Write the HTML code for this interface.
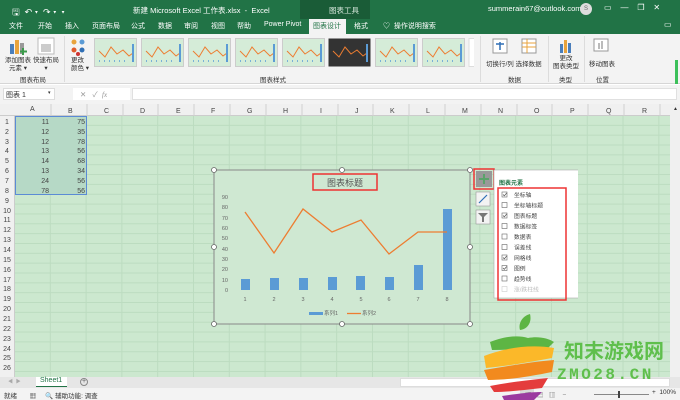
<!DOCTYPE html>
<html><head><meta charset="utf-8"><style>
*{margin:0;padding:0;box-sizing:border-box}
body{width:680px;height:400px;overflow:hidden;position:relative;font-family:"Liberation Sans","Noto Sans CJK SC",sans-serif;font-size:7px;color:#333;background:#fff}
.a{position:absolute}
.t{white-space:nowrap}
</style></head><body>
<!-- title bar -->
<div class="a" style="left:0;top:0;width:680px;height:34px;background:#217346"></div>
<div class="a" style="left:300px;top:0;width:70px;height:19px;background:#1a5c37"></div>
<div class="a t" style="left:12px;top:5px;color:#fff;font-size:9px">🖫 &nbsp;↶ ▾ &nbsp;↷ ▾ &nbsp;▾</div>
<div class="a t" style="left:133px;top:5px;color:#fff;font-size:7.5px">新建 Microsoft Excel 工作表.xlsx &nbsp;- &nbsp;Excel</div>
<div class="a t" style="left:329px;top:5px;color:#d8e8dd;font-size:7.5px">图表工具</div>
<div class="a t" style="left:488px;top:4px;color:#fff;font-size:7.5px">summerain67@outlook.com</div>
<div class="a" style="left:580px;top:3px;width:12px;height:12px;border-radius:6px;background:#ddd;color:#666;font-size:6px;text-align:center;line-height:12px">S</div>
<div class="a t" style="left:604px;top:3px;color:#fff;font-size:8px">▭ &nbsp;&nbsp; — &nbsp;&nbsp; ❐ &nbsp;&nbsp; ✕</div>
<!-- tabs -->
<div class="a t" style="left:9px;top:21px;color:#fff;font-size:7px;word-spacing:0">文件</div>
<div class="a t" style="left:38px;top:21px;color:#fff">开始</div>
<div class="a t" style="left:65px;top:21px;color:#fff">插入</div>
<div class="a t" style="left:92px;top:21px;color:#fff">页面布局</div>
<div class="a t" style="left:131px;top:21px;color:#fff">公式</div>
<div class="a t" style="left:158px;top:21px;color:#fff">数据</div>
<div class="a t" style="left:184px;top:21px;color:#fff">审阅</div>
<div class="a t" style="left:211px;top:21px;color:#fff">视图</div>
<div class="a t" style="left:237px;top:21px;color:#fff">帮助</div>
<div class="a t" style="left:264px;top:21px;color:#fff">Power Pivot</div>
<div class="a" style="left:309px;top:19px;width:37px;height:15px;background:#f3f3f3"></div>
<div class="a t" style="left:313px;top:21px;color:#217346">图表设计</div>
<div class="a t" style="left:354px;top:21px;color:#fff">格式</div>
<div class="a t" style="left:383px;top:21px;color:#fff">♡ &nbsp;操作说明搜索</div>
<div class="a t" style="left:664px;top:20px;color:#fff;font-size:8px">▭</div>
<!-- ribbon -->
<div class="a" style="left:0;top:34px;width:680px;height:50px;background:#f3f3f3;border-bottom:1px solid #d6d6d6"></div>
<svg class="a" style="left:8px;top:38px" width="20" height="18"><rect x="2" y="6" width="4" height="10" fill="#4a7ebb"/><rect x="7" y="2" width="4" height="14" fill="#e8a33c"/><rect x="12" y="5" width="4" height="11" fill="#999"/><path d="M15 10v7M12 13.5h7" stroke="#3a9a4a" stroke-width="2"/></svg>
<div class="a t" style="left:5px;top:57px;font-size:6.5px;line-height:8px;text-align:center">添加图表<br>元素 ▾</div>
<svg class="a" style="left:37px;top:37px" width="18" height="18"><rect x="1" y="1" width="16" height="16" fill="#fff" stroke="#bbb"/><rect x="4" y="7" width="10" height="8" fill="#ccc"/></svg>
<div class="a t" style="left:33px;top:57px;font-size:6.5px;line-height:8px;text-align:center">快速布局<br>▾</div>
<div class="a t" style="left:20px;top:74px;font-size:6.5px">图表布局</div>
<div class="a" style="left:64px;top:36px;width:1px;height:46px;background:#dcdcdc"></div>
<svg class="a" style="left:70px;top:38px" width="18" height="18"><circle cx="4" cy="4" r="2.5" fill="#e8a33c"/><circle cx="12" cy="4" r="2.5" fill="#5b9bd5"/><circle cx="4" cy="12" r="2.5" fill="#e05a2a"/><circle cx="12" cy="12" r="2.5" fill="#2f6fb5"/><circle cx="8" cy="16" r="2" fill="#c33"/></svg>
<div class="a t" style="left:71px;top:57px;font-size:6.5px;line-height:8px">更改<br>颜色 ▾</div>
<svg class="a" style="left:94px;top:38px" width="380" height="30">
<g id="th"><rect x="0.5" y="0.5" width="42" height="28" fill="#d5ecd8" stroke="#ccc"/><polyline points="5,13 11,19 17,9 23,16 29,12 35,18 39,15" fill="none" stroke="#ed7d31" stroke-width="1"/><rect x="38" y="6" width="2" height="18" fill="#5b9bd5"/><path d="M5 23h30" stroke="#5b9bd5" stroke-dasharray="1 4" stroke-width="1.5"/></g>
<use href="#th" x="47"/><use href="#th" x="94"/><use href="#th" x="141"/><use href="#th" x="188"/>
<rect x="234.5" y="0.5" width="42" height="28" fill="#333"/><polyline points="239,13 245,19 251,9 257,16 263,12 269,18 273,15" fill="none" stroke="#ed7d31"/><rect x="272" y="6" width="2" height="18" fill="#5b9bd5"/>
<use href="#th" x="281"/><use href="#th" x="328"/>
<rect x="375" y="0.5" width="6" height="28" fill="#fff" stroke="#ddd"/>
</svg>
<div class="a t" style="left:260px;top:74px;font-size:6.5px">图表样式</div>
<div class="a" style="left:480px;top:36px;width:1px;height:46px;background:#dcdcdc"></div>
<svg class="a" style="left:492px;top:38px" width="16" height="16"><rect x="1" y="1" width="14" height="14" fill="#fff" stroke="#999"/><path d="M4 6h8M8 4v8" stroke="#2f6fb5" stroke-width="1.5"/></svg>
<svg class="a" style="left:521px;top:38px" width="16" height="16"><rect x="1" y="1" width="14" height="14" fill="#fff" stroke="#999"/><path d="M1 5h14M1 9h14M6 1v14" stroke="#e8a33c"/></svg>
<div class="a t" style="left:486px;top:58px;font-size:6.5px">切换行/列 选择数据</div>
<div class="a t" style="left:508px;top:74px;font-size:6.5px">数据</div>
<div class="a" style="left:548px;top:36px;width:1px;height:46px;background:#dcdcdc"></div>
<svg class="a" style="left:558px;top:38px" width="16" height="16"><rect x="2" y="6" width="3" height="9" fill="#4a7ebb"/><rect x="6" y="2" width="3" height="13" fill="#e8a33c"/><rect x="10" y="5" width="3" height="10" fill="#4a7ebb"/></svg>
<div class="a t" style="left:553px;top:55px;font-size:6.5px;line-height:8px;text-align:center">更改<br>图表类型</div>
<div class="a t" style="left:559px;top:74px;font-size:6.5px">类型</div>
<div class="a" style="left:584px;top:36px;width:1px;height:46px;background:#dcdcdc"></div>
<svg class="a" style="left:593px;top:38px" width="16" height="16"><rect x="1" y="1" width="14" height="12" fill="#fff" stroke="#999"/><rect x="5" y="5" width="2" height="6" fill="#bbb"/><rect x="8" y="3" width="2" height="8" fill="#bbb"/></svg>
<div class="a t" style="left:589px;top:58px;font-size:6.5px">移动图表</div>
<div class="a t" style="left:596px;top:74px;font-size:6.5px">位置</div>
<div class="a" style="left:675px;top:60px;width:3px;height:24px;background:#3cc05a"></div>
<!-- formula bar -->
<div class="a" style="left:0;top:85px;width:680px;height:19px;background:#f3f3f3"></div>
<div class="a" style="left:3px;top:88px;width:52px;height:12px;background:#fff;border:1px solid #ddd"></div>
<div class="a t" style="left:6px;top:90px;font-size:7px">图表 1</div>
<div class="a t" style="left:48px;top:90px;font-size:5px">▾</div>
<div class="a" style="left:73px;top:88px;width:57px;height:12px;background:#fff"></div>
<div class="a t" style="left:80px;top:89px;color:#999;font-size:7.5px">✕ &nbsp; ✓ &nbsp;<i style="font-family:'Liberation Serif'">fx</i></div>
<div class="a" style="left:132px;top:88px;width:545px;height:12px;background:#fff;border:1px solid #e0e0e0"></div>
<!-- grid -->
<div class="a" style="left:0;top:104px;width:670px;height:12px;background:#f0f0f0;border-bottom:1px solid #ccc"></div>
<div class="a" style="left:0;top:116px;width:15px;height:261px;background:#f0f0f0;border-right:1px solid #ccc"></div>
<div class="a" style="left:15px;top:116px;width:655px;height:261px;background-color:#cce8cf;background-image:linear-gradient(to right,#bcdcc0 1px,transparent 1px),linear-gradient(to bottom,#bcdcc0 1px,transparent 1px);background-size:35.8px 100%,100% 9.85px;background-position:-1px 0,0 -1px"></div>
<div class="a" style="left:15px;top:116px;width:72px;height:79px;background:#b6d9c6;border:1px solid #5b8bd5"></div>
<div class="a" style="left:670px;top:104px;width:10px;height:273px;background:#f0f0f0"></div>
<div class="a t" style="left:673px;top:106px;font-size:5px">▲</div>
<div id="cols"></div>
<div class="a t" style="left:30px;top:106px;font-size:7px;color:#444;word-spacing:0">A</div>
<svg class="a" style="left:0;top:104px" width="670" height="12" font-size="7" fill="#444" font-family="Liberation Sans">
<text x="68" y="9">B</text><text x="104" y="9">C</text><text x="140" y="9">D</text><text x="176" y="9">E</text><text x="211" y="9">F</text><text x="247" y="9">G</text><text x="283" y="9">H</text><text x="320" y="9">I</text><text x="355" y="9">J</text><text x="390" y="9">K</text><text x="426" y="9">L</text><text x="462" y="9">M</text><text x="498" y="9">N</text><text x="534" y="9">O</text><text x="570" y="9">P</text><text x="606" y="9">Q</text><text x="642" y="9">R</text>
<path d="M51 0v12M87 0v12M123 0v12M158 0v12M194 0v12M230 0v12M266 0v12M302 0v12M338 0v12M373 0v12M409 0v12M445 0v12M481 0v12M517 0v12M552 0v12M588 0v12M624 0v12M660 0v12" stroke="#d0d0d0"/>
</svg>
<svg class="a" style="left:0;top:116px" width="90" height="261" font-size="7" fill="#444" font-family="Liberation Sans">
<g text-anchor="middle">
<text x="7" y="8">1</text><text x="7" y="18">2</text><text x="7" y="28">3</text><text x="7" y="37">4</text><text x="7" y="47">5</text><text x="7" y="57">6</text><text x="7" y="67">7</text><text x="7" y="77">8</text><text x="7" y="87">9</text><text x="7" y="97">10</text><text x="7" y="106">11</text><text x="7" y="116">12</text><text x="7" y="126">13</text><text x="7" y="136">14</text><text x="7" y="146">15</text><text x="7" y="156">16</text><text x="7" y="166">17</text><text x="7" y="175">18</text><text x="7" y="185">19</text><text x="7" y="195">20</text><text x="7" y="205">21</text><text x="7" y="215">22</text><text x="7" y="225">23</text><text x="7" y="235">24</text><text x="7" y="244">25</text><text x="7" y="254">26</text></g>
<g text-anchor="end"><text x="49" y="8">11</text><text x="85" y="8">75</text><text x="49" y="18">12</text><text x="85" y="18">35</text><text x="49" y="28">12</text><text x="85" y="28">78</text><text x="49" y="37">13</text><text x="85" y="37">56</text><text x="49" y="47">14</text><text x="85" y="47">68</text><text x="49" y="57">13</text><text x="85" y="57">34</text><text x="49" y="67">24</text><text x="85" y="67">56</text><text x="49" y="77">78</text><text x="85" y="77">56</text></g>
</svg>
<!-- chart -->
<svg class="a" style="left:208px;top:165px" width="370" height="170" font-family="Liberation Sans,Noto Sans CJK SC">
<rect x="6" y="5" width="256" height="154" fill="#cfe8d2" stroke="#888" stroke-width="1"/>
<rect x="105" y="9" width="64" height="16" fill="none" stroke="#e33" stroke-width="1.5"/>
<text x="137" y="21" font-size="9" fill="#555" text-anchor="middle">图表标题</text>
<g font-size="5.5" fill="#666" text-anchor="end">
<text x="20" y="34">90</text><text x="20" y="44">80</text><text x="20" y="55">70</text><text x="20" y="65">60</text><text x="20" y="75">50</text><text x="20" y="86">40</text><text x="20" y="96">30</text><text x="20" y="106">20</text><text x="20" y="117">10</text><text x="20" y="127">0</text></g>
<g fill="#5b9bd5">
<rect x="33" y="114" width="9" height="11"/><rect x="62" y="113" width="9" height="12"/><rect x="91" y="113" width="9" height="12"/><rect x="120" y="112" width="9" height="13"/><rect x="148" y="111" width="9" height="14"/><rect x="177" y="112" width="9" height="13"/><rect x="206" y="100" width="9" height="25"/><rect x="235" y="44" width="9" height="81"/></g>
<polyline points="37,47 66,88 95,44 124,67 153,55 181,89 210,67 239,67" fill="none" stroke="#ed7d31" stroke-width="1.3"/>
<g font-size="5.5" fill="#666" text-anchor="middle"><text x="37" y="136">1</text><text x="66" y="136">2</text><text x="95" y="136">3</text><text x="124" y="136">4</text><text x="153" y="136">5</text><text x="181" y="136">6</text><text x="210" y="136">7</text><text x="239" y="136">8</text></g>
<rect x="101" y="147" width="14" height="3" fill="#5b9bd5"/><text x="116" y="150" font-size="5.5" fill="#666">系列1</text>
<path d="M139 148.5h14" stroke="#ed7d31" stroke-width="1.3"/><text x="154" y="150" font-size="5.5" fill="#666">系列2</text>
<g fill="#fff" stroke="#666" stroke-width="0.8"><circle cx="6" cy="5" r="2.5"/><circle cx="134" cy="5" r="2.5"/><circle cx="262" cy="5" r="2.5"/><circle cx="6" cy="82" r="2.5"/><circle cx="262" cy="82" r="2.5"/><circle cx="6" cy="159" r="2.5"/><circle cx="134" cy="159" r="2.5"/><circle cx="262" cy="159" r="2.5"/></g>
<!-- side buttons -->
<rect x="266" y="4" width="20" height="20" fill="none" stroke="#e33" stroke-width="1.5"/>
<rect x="268" y="6" width="16" height="16" fill="#999"/><path d="M276 9v10M271 14h10" stroke="#5aa36a" stroke-width="2"/>
<rect x="268" y="27" width="14" height="14" fill="#f3f3f3" stroke="#999" stroke-width="0.6"/><path d="M271 38l8-8" stroke="#2f6fb5" stroke-width="1.2"/>
<rect x="268" y="45" width="14" height="14" fill="#f3f3f3" stroke="#999" stroke-width="0.6"/><path d="M270 48h10l-4 4v5h-2v-5z" fill="#777"/>
<!-- panel -->
<rect x="286" y="5" width="85" height="128" fill="#fff" stroke="#aaa" stroke-width="0.6"/>
<text x="291" y="20" font-size="6" fill="#217346" font-weight="bold">图表元素</text>
<rect x="290" y="23" width="68" height="112" fill="none" stroke="#e33" stroke-width="1.5"/>
<g font-size="5.8" fill="#444">
<text x="306" y="32">坐标轴</text><text x="306" y="42.5">坐标轴标题</text><text x="306" y="53">图表标题</text><text x="306" y="63.5">数据标签</text><text x="306" y="74">数据表</text><text x="306" y="84.5">误差线</text><text x="306" y="95">网格线</text><text x="306" y="105.5">图例</text><text x="306" y="116">趋势线</text><text x="306" y="126.5" fill="#bbb">涨/跌柱线</text></g>
<g fill="#fff" stroke="#666" stroke-width="0.6"><rect x="294" y="27" width="5" height="5"/><rect x="294" y="37.5" width="5" height="5"/><rect x="294" y="48" width="5" height="5"/><rect x="294" y="58.5" width="5" height="5"/><rect x="294" y="69" width="5" height="5"/><rect x="294" y="79.5" width="5" height="5"/><rect x="294" y="90" width="5" height="5"/><rect x="294" y="100.5" width="5" height="5"/><rect x="294" y="111" width="5" height="5"/><rect x="294" y="121.5" width="5" height="5" stroke="#ccc"/></g>
<g fill="none" stroke="#555" stroke-width="0.7"><path d="M295 29.5l1.3 1.3 2.4-2.8"/><path d="M295 50.5l1.3 1.3 2.4-2.8"/><path d="M295 92.5l1.3 1.3 2.4-2.8"/><path d="M295 103l1.3 1.3 2.4-2.8"/></g>
</svg>
<!-- sheet tabs -->
<div class="a" style="left:0;top:377px;width:680px;height:11px;background:#e6e6e6"></div>
<div class="a t" style="left:8px;top:378px;font-size:5px;color:#aaa">◀ &nbsp;▶</div>
<div class="a" style="left:36px;top:377px;width:31px;height:10px;background:#fff;border-bottom:1.5px solid #217346"></div>
<div class="a t" style="left:40px;top:377px;font-size:7px;color:#217346">Sheet1</div>
<div class="a" style="left:80px;top:378px;width:8px;height:8px;border:1px solid #888;border-radius:4px;font-size:7px;line-height:6px;text-align:center;color:#666">+</div>
<div class="a" style="left:400px;top:378px;width:270px;height:9px;background:#fff;border:1px solid #ddd"></div>
<!-- status -->
<div class="a" style="left:0;top:388px;width:680px;height:12px;background:#f3f3f3"></div>
<div class="a t" style="left:4px;top:390px;font-size:6.5px">就绪 &nbsp; &nbsp; &nbsp; ▦ &nbsp; &nbsp; 🔍 辅助功能: 调查</div>
<div class="a" style="left:520px;top:388px;width:14px;height:12px;background:#d8d8d8"></div>
<div class="a t" style="left:525px;top:389px;font-size:6.5px;color:#777">▦ &nbsp; ▤ &nbsp; ▥ &nbsp;&nbsp; −</div>
<div class="a" style="left:594px;top:394px;width:55px;height:1px;background:#888"></div>
<div class="a" style="left:618px;top:391px;width:2px;height:7px;background:#444"></div>
<div class="a t" style="left:652px;top:389px;font-size:6.5px">+ &nbsp;100%</div>
<!-- watermark -->
<svg class="a" style="left:480px;top:312px" width="80" height="88">
<path d="M40 18c-2-6 2-14 10-16 2 8-2 15-10 16z" fill="#5db544"/>
<path d="M10 30c10-4 26-8 38-4 10-2 20 0 26 4l-6 6c-18 0-36 2-56 2z" fill="#5db544"/>
<path d="M4 44c20-8 46-12 70-8l-2 10c-22 4-44 8-66 10z" fill="#fbb829"/>
<path d="M4 58c24-4 46-8 70-10l-2 12c-20 4-42 8-64 8z" fill="#f28a1e"/>
<path d="M10 74c20-4 40-6 58-8l-6 10c-18 2-34 4-48 4z" fill="#e43c3c"/>
<path d="M22 84c14-2 28-4 40-4l-8 8h-30z" fill="#9b3aa0"/>
</svg>
<div class="a t" style="left:564px;top:335px;font-size:20px;font-weight:bold;color:#5fbf4c;letter-spacing:0">知末游戏网</div>
<div class="a t" style="left:557px;top:366px;font-size:16px;font-weight:bold;color:#5fbf4c;letter-spacing:2.5px;font-family:'Liberation Mono',monospace">ZMO28.CN</div>
</body></html>
